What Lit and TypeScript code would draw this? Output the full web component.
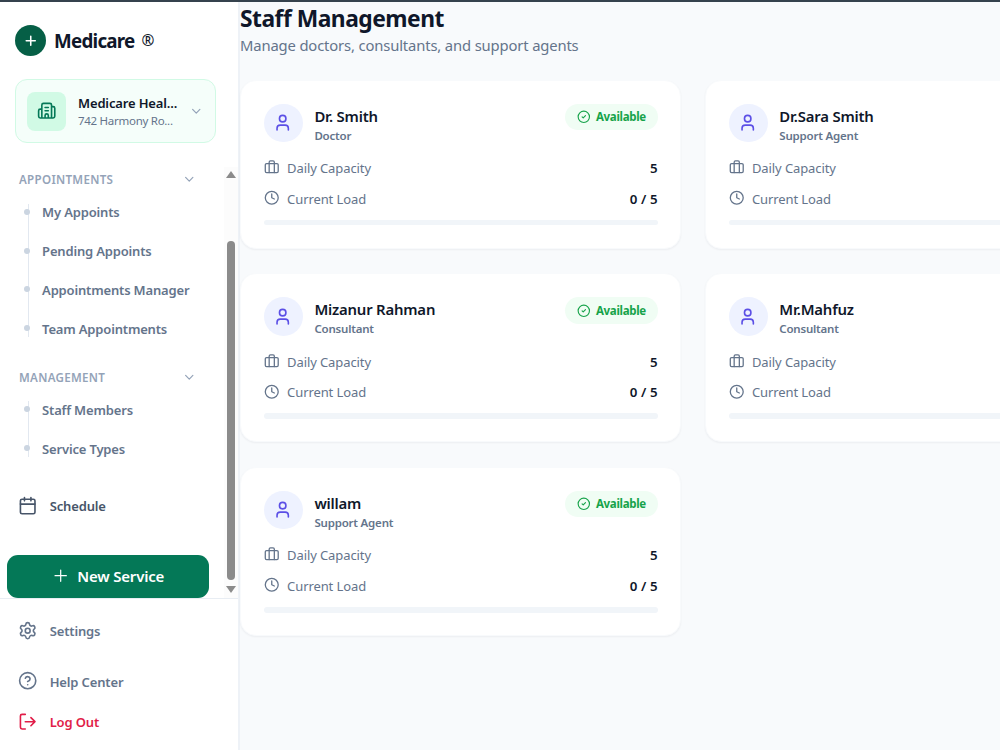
import { LitElement, html, css, svg, SVGTemplateResult } from "lit";
import { customElement, property } from "lit/decorators.js";

const icons: Record<string, SVGTemplateResult> = {
  user: svg`<path d="M19 21v-2a4 4 0 0 0-4-4H9a4 4 0 0 0-4 4v2"/><circle cx="12" cy="7" r="4"/>`,
  briefcase: svg`<rect x="2" y="7" width="20" height="14" rx="2"/><path d="M16 21V5a2 2 0 0 0-2-2h-4a2 2 0 0 0-2 2v16"/>`,
  clock: svg`<circle cx="12" cy="12" r="10"/><path d="M12 6v6l4 2"/>`,
  check: svg`<circle cx="12" cy="12" r="10"/><path d="m9 12 2 2 4-4"/>`,
  chevron: svg`<path d="m6 9 6 6 6-6"/>`,
  plus: svg`<path d="M5 12h14M12 5v14"/>`,
  building: svg`<path d="M10 12h4M10 8h4M14 21v-3a2 2 0 0 0-4 0v3M6 10H4a2 2 0 0 0-2 2v7a2 2 0 0 0 2 2h16a2 2 0 0 0 2-2V9a2 2 0 0 0-2-2h-2M6 21V5a2 2 0 0 1 2-2h8a2 2 0 0 1 2 2v16"/>`,
  calendar: svg`<path d="M8 2v4M16 2v4M3 10h18"/><rect x="3" y="4" width="18" height="18" rx="2"/>`,
  settings: svg`<path d="M9.671 4.136a2.34 2.34 0 0 1 4.659 0 2.34 2.34 0 0 0 3.319 1.915 2.34 2.34 0 0 1 2.33 4.033 2.34 2.34 0 0 0 0 3.831 2.34 2.34 0 0 1-2.33 4.033 2.34 2.34 0 0 0-3.319 1.915 2.34 2.34 0 0 1-4.659 0 2.34 2.34 0 0 0-3.32-1.915 2.34 2.34 0 0 1-2.33-4.033 2.34 2.34 0 0 0 0-3.831A2.34 2.34 0 0 1 6.35 6.051a2.34 2.34 0 0 0 3.319-1.915"/><circle cx="12" cy="12" r="3"/>`,
  help: svg`<circle cx="12" cy="12" r="10"/><path d="M9.09 9a3 3 0 0 1 5.83 1c0 2-3 3-3 3M12 17h.01"/>`,
  logout: svg`<path d="m16 17 5-5-5-5M21 12H9M9 21H5a2 2 0 0 1-2-2V5a2 2 0 0 1 2-2h4"/>`,
};

@customElement("ui-icon")
export class UiIcon extends LitElement {
  @property() name = "";
  static styles = css`
    :host { display: block; flex: none; width: 19.4px; height: 19.4px; }
    svg { display: block; width: 100%; height: 100%; overflow: visible; fill: none; stroke: currentColor; stroke-width: var(--stroke, 2); stroke-linecap: round; stroke-linejoin: round; }
  `;
  render() {
    return html`<svg viewBox="0 0 24 24">${icons[this.name]}</svg>`;
  }
}

@customElement("staff-card")
export class StaffCard extends LitElement {
  @property() name = "";
  @property() role = "";
  @property({ type: Number }) load = 0;
  @property({ type: Number }) capacity = 5;
  static styles = css`
    :host { display: block; box-sizing: border-box; height: 169.4px; padding: 23px 22.3px 0 23px; border: 1px solid #f8fafc; border-radius: 16px; background: #fff; box-shadow: 0 1px 2px rgba(15, 23, 42, 0.05); }
    .head { display: flex; align-items: flex-start; height: 38.8px; }
    .avatar { display: grid; place-items: center; width: 38.8px; height: 38.8px; border-radius: 50%; background: #eef2ff; color: #5b4fe6; }
    .avatar ui-icon { margin-left: -1px; }
    .who { flex: 1; padding-left: 11.6px; white-space: nowrap; }
    .name { height: 24px; line-height: 24px; font-size: 14.9px; font-weight: 600; letter-spacing: -0.2px; color: #0f172a; }
    .role { height: 15px; line-height: 15px; font-size: 11.5px; font-weight: 600; letter-spacing: -0.2px; color: #64748b; }
    .badge { display: flex; align-items: center; gap: 5.6px; box-sizing: border-box; width: 92.6px; height: 26.6px; padding-left: 11.6px; border-radius: 14px; background: #f0fdf4; color: #16a34a; font-size: 11.5px; font-weight: 700; letter-spacing: -0.3px; }
    .badge ui-icon { width: 13.6px; height: 13.6px; }
    .row { display: flex; align-items: center; height: 19.4px; margin-top: 11.4px; font-size: 13px; letter-spacing: -0.1px; color: #64748b; }
    .row.first { margin-top: 16px; }
    .row ui-icon { width: 15.5px; height: 15.5px; margin: -2px 7.6px 0 0; }
    .value { margin-left: auto; font-size: 13.3px; font-weight: 600; letter-spacing: 0.1px; color: #0f172a; }
    .track { height: 5.8px; margin-top: 11.2px; border-radius: 3px; background: #f1f5f9; overflow: hidden; }
    .fill { height: 100%; background: #4f46e5; }
  `;
  render() {
    return html`
      <div class="head">
        <div class="avatar"><ui-icon name="user"></ui-icon></div>
        <div class="who"><div class="name">${this.name}</div><div class="role">${this.role}</div></div>
        <div class="badge"><ui-icon name="check"></ui-icon><span>Available</span></div>
      </div>
      <div class="row first"><ui-icon name="briefcase"></ui-icon><span>Daily Capacity</span><span class="value">${this.capacity}</span></div>
      <div class="row"><ui-icon name="clock"></ui-icon><span>Current Load</span><span class="value">${this.load} / ${this.capacity}</span></div>
      <div class="track"><div class="fill" style="width:${(this.load / this.capacity) * 100}%"></div></div>
    `;
  }
}

const staff = [
  ["Dr. Smith", "Doctor"],
  ["Dr.Sara Smith", "Support Agent"],
  ["Mizanur Rahman", "Consultant"],
  ["Mr.Mahfuz", "Consultant"],
  ["willam", "Support Agent"],
];

@customElement("app-root")
export class AppRoot extends LitElement {
  static styles = css`
    :host { display: flex; flex-direction: column; box-sizing: border-box; width: 1000px; height: 750px; overflow: hidden; border-top: 2px solid #35424d; background: #f8fafc; font-family: "Noto Sans", "Open Sans", sans-serif; color: #0f172a; }
    .layout { display: flex; flex: 1; min-height: 0; }
    aside { display: flex; flex-direction: column; flex: none; box-sizing: border-box; width: 240px; border-right: 2px solid #eef2f7; background: #fff; white-space: nowrap; }
    .brand { display: flex; align-items: center; height: 30px; padding: 23.5px 0 0 15px; font-size: 18.8px; font-weight: 700; letter-spacing: -0.75px; }
    .logo { display: grid; place-items: center; width: 31px; height: 31px; margin-right: 8px; border-radius: 50%; background: #065f46; color: #fff; }
    .logo ui-icon { width: 15.5px; height: 15.5px; --stroke: 2.4; }
    .reg { margin: -2px 0 0 7px; font-size: 15.5px; font-weight: 500; letter-spacing: 0; }
    .clinic { display: flex; align-items: center; box-sizing: border-box; width: 201px; height: 64px; margin: 23.5px 0 0 15px; padding: 0 11.4px 0 11px; border: 1px solid #d1fae5; border-radius: 12px; background: #f5fefa; }
    .clinic-icon { display: grid; place-items: center; width: 39px; height: 39px; border-radius: 8px; background: #d1fae5; color: #047857; }
    .clinic-text { flex: 1; padding: 1px 0 0 12px; }
    .clinic-name { line-height: 18px; font-size: 13px; font-weight: 600; letter-spacing: -0.15px; }
    .clinic-address { line-height: 17px; font-size: 11.5px; letter-spacing: -0.28px; color: #64748b; }
    .small { width: 14.5px; height: 14.5px; color: #94a3b8; }
    .scroll { display: flex; height: 430.5px; margin-top: 24px; }
    .nav { flex: 1; }
    .section { display: flex; align-items: center; justify-content: space-between; height: 24px; padding: 0 27.6px 0 19px; font-size: 11.6px; font-weight: 600; letter-spacing: 0.3px; color: #94a3b8; }
    .section.second { margin-top: 22px; }
    .tree { display: flex; flex-direction: column; position: relative; gap: 9.7px; margin-top: 6.8px; }
    .section.second + .tree { margin-top: 6.2px; }
    .tree::before { content: ""; position: absolute; left: 28px; top: 6px; bottom: 6px; width: 1px; background: #e2e8f0; }
    .item { display: flex; align-items: center; position: relative; height: 29.1px; padding-left: 24.4px; font-size: 13px; font-weight: 600; letter-spacing: -0.17px; color: #64748b; }
    .dot { width: 6px; height: 6px; margin: -1px 11.7px 0 0; border-radius: 50%; background: #cbd5e1; }
    .link { display: flex; align-items: center; height: 39px; padding-left: 18.4px; font-size: 13px; font-weight: 600; letter-spacing: -0.15px; color: #64748b; }
    .link ui-icon { margin: -1.2px 11.9px 0 0; }
    .schedule { margin-top: 23.6px; color: #475569; }
    .link.schedule ui-icon { margin-top: -0.5px; }
    .new { display: flex; align-items: center; justify-content: center; gap: 7px; width: 202px; height: 43px; margin: 29px 0 0 7px; border-radius: 11px; background: #047857; color: #fff; font-size: 15px; font-weight: 600; letter-spacing: -0.2px; }
    .new ui-icon { margin: -1px 0 0 -1px; --stroke: 1.5; }
    .bar { display: flex; flex-direction: column; align-items: center; width: 14px; background: #fcfcfc; }
    .up, .down { border: 5px solid transparent; border-top-width: 0; border-bottom: 7px solid #8b8b8b; }
    .up { margin-top: 3.5px; }
    .down { border-top: 7px solid #8b8b8b; border-bottom-width: 0; margin-top: 6px; }
    .thumb { width: 7.4px; height: 339px; margin-top: 63.5px; border-radius: 4px; background: #8b8b8b; }
    footer { flex: 1; border-top: 1px solid #e8edf3; }
    .settings { margin-top: 13.2px; }
    .help { margin-top: 11.4px; }
    .logout { margin-top: 1.8px; color: #e11d48; }
    main { flex: 1; min-width: 0; }
    h1 { margin: 0; height: 31px; line-height: 33px; font-size: 22.8px; font-weight: 700; letter-spacing: -0.5px; white-space: nowrap; }
    .sub { height: 24px; line-height: 24px; font-size: 14.8px; letter-spacing: -0.15px; color: #64748b; white-space: nowrap; }
    .grid { display: grid; grid-template-columns: 441px 441px; gap: 24.2px 23.9px; margin-top: 22.5px; }
  `;
  item(label: string) {
    return html`<div class="item"><span class="dot"></span><span>${label}</span></div>`;
  }
  render() {
    return html`
      <div class="layout">
        <aside>
          <div class="brand"><span class="logo"><ui-icon name="plus"></ui-icon></span><span>Medicare</span><span class="reg">®</span></div>
          <div class="clinic">
            <div class="clinic-icon"><ui-icon name="building"></ui-icon></div>
            <div class="clinic-text"><div class="clinic-name">Medicare Heal...</div><div class="clinic-address">742 Harmony Ro...</div></div>
            <ui-icon class="small" name="chevron"></ui-icon>
          </div>
          <div class="scroll">
            <div class="nav">
              <div class="section"><span>APPOINTMENTS</span><ui-icon class="small" name="chevron"></ui-icon></div>
              <div class="tree">${["My Appoints", "Pending Appoints", "Appointments Manager", "Team Appointments"].map(this.item)}</div>
              <div class="section second"><span>MANAGEMENT</span><ui-icon class="small" name="chevron"></ui-icon></div>
              <div class="tree">${["Staff Members", "Service Types"].map(this.item)}</div>
              <div class="link schedule"><ui-icon name="calendar"></ui-icon><span>Schedule</span></div>
              <div class="new"><ui-icon name="plus"></ui-icon><span>New Service</span></div>
            </div>
            <div class="bar"><div class="up"></div><div class="thumb"></div><div class="down"></div></div>
          </div>
          <footer>
            <div class="link settings"><ui-icon name="settings"></ui-icon><span>Settings</span></div>
            <div class="link help"><ui-icon name="help"></ui-icon><span>Help Center</span></div>
            <div class="link logout"><ui-icon name="logout"></ui-icon><span>Log Out</span></div>
          </footer>
        </aside>
        <main>
          <h1>Staff Management</h1>
          <div class="sub">Manage doctors, consultants, and support agents</div>
          <div class="grid">${staff.map(([n, r]) => html`<staff-card .name=${n} .role=${r}></staff-card>`)}</div>
        </main>
      </div>
    `;
  }
}
